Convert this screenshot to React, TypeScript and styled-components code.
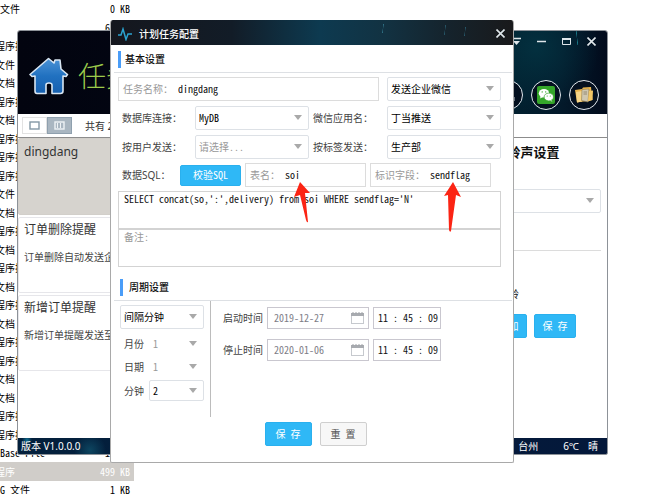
import React from "react";
import styled, { createGlobalStyle } from "styled-components";

const sans = `"Noto Sans", "Noto Sans CJK SC", sans-serif`;
const mono = `"Noto Sans Mono CJK SC", "Noto Sans CJK SC", "Liberation Mono", monospace`;

const GlobalStyle = createGlobalStyle`
  *, *::before, *::after { box-sizing: border-box; }
  body { margin: 0; background: #fff; color: #222; font: 10px/14px ${sans}; overflow: hidden; }
  button, input, select, textarea { font: inherit; color: inherit; margin: 0; }
  button { cursor: pointer; }
  h1, h2, h3, p, ul { margin: 0; padding: 0; font-weight: 400; }
`;

/* ---------- desktop and file list ---------- */

const Desktop = styled.main`
  position: relative;
  height: 100vh;
  overflow: hidden;
`;

const FileList = styled.ul`
  list-style: none;
  width: 134px;
  overflow: hidden;
  font-family: ${mono};
  color: #000;
`;

const FileRow = styled.li<{ $selected?: boolean }>`
  display: flex;
  justify-content: space-between;
  align-items: center;
  height: 18px;
  padding-right: 4px;
  white-space: pre;
  background: ${(p) => (p.$selected ? "#d0cdc9" : "transparent")};
  color: ${(p) => (p.$selected ? "#fff" : "#000")};
  &:nth-child(even) { height: 19px; }
`;

const FileKind = styled.span<{ $clipped?: boolean }>`
  margin-left: ${(p) => (p.$clipped ? "-5px" : "0")};
`;

/* ---------- task window ---------- */

const Window = styled.section`
  position: absolute;
  left: 17px;
  right: 63px;
  top: 30px;
  display: flex;
  flex-direction: column;
  border: 1px solid #8d9298;
  border-radius: 3px 3px 2px 2px;
  background: #fff;
  overflow: hidden;
`;

const Banner = styled.header`
  display: flex;
  justify-content: space-between;
  height: 83px;
  background:
    linear-gradient(84deg, transparent 46%, #1a7c8c 50%, transparent 54%) calc(100% - 24px) 0 / 12px 14px no-repeat,
    radial-gradient(circle at 88% 20%, #03303f 0, transparent 12%),
    linear-gradient(90deg, #02040f 0, #030716 50%, #02202f 84%, #031a2b 92%, #020b1c 100%);
`;

const Brand = styled.div`
  display: flex;
  align-items: center;
  gap: 9px;
  padding: 6px 0 0 11px;
`;

const BrandTitle = styled.h1`
  font: 300 28px/36px ${sans};
  color: #9ccb4b;
`;

const BannerTools = styled.div`
  display: flex;
  flex-direction: column;
  align-items: flex-end;
  justify-content: space-between;
  padding: 6px 8px 4px 0;
`;

const ToolRow = styled.div<{ $gap: number; $end?: number }>`
  display: flex;
  align-items: center;
  gap: ${(p) => p.$gap}px;
  padding-right: ${(p) => p.$end ?? 0}px;
`;

const GlyphButton = styled.button`
  display: flex;
  padding: 0;
  border: 0;
  background: none;
  color: #dfe6ea;
`;

const RoundButton = styled.button`
  display: grid;
  place-items: center;
  width: 30px;
  height: 30px;
  padding: 0;
  border: 1px solid #e2e8ee;
  border-radius: 50%;
  background: #04101f;
`;

const Toolbar = styled.div`
  display: flex;
  align-items: center;
  height: 24px;
  padding-left: 4px;
  border-bottom: 1px solid #8c8c8c;
  font-size: 10px;
  color: #333;
`;

const ViewToggle = styled.button<{ $on?: boolean }>`
  display: grid;
  place-items: center;
  width: 25px;
  height: 17px;
  padding: 0;
  border: 1px solid ${(p) => (p.$on ? "#8fa0ae" : "#e2e2e2")};
  background: ${(p) => (p.$on ? "#a9b6c1" : "#fff")};
`;

const Count = styled.span`
  padding-left: 13px;
`;

const Columns = styled.div`
  display: grid;
  grid-template-columns: 1fr 151px;
  height: 300px;
`;

const Tasks = styled.ul`
  display: flex;
  flex-direction: column;
  gap: 2px;
  list-style: none;
`;

const Task = styled.li<{ $active?: boolean }>`
  height: ${(p) => (p.$active ? 77 : 76)}px;
  padding: ${(p) => (p.$active ? "4px 5px" : "3px 5px")};
  border: 1px solid ${(p) => (p.$active ? "#d2cfca" : "#e6e6ea")};
  border-radius: 2px;
  background: ${(p) => (p.$active ? "#d6d3ce" : "#fff")};
  color: #333;
`;

const TaskName = styled.h3`
  font-size: 12px;
  line-height: 18px;
`;

const TaskNote = styled.p`
  margin-top: 11px;
  line-height: 14px;
  color: #444;
`;

const Ringtone = styled.aside`
  display: flex;
  flex-direction: column;
  padding: 3px 6px 0 4px;
`;

const RingtoneTitle = styled.h2`
  padding-left: 6px;
  font: 700 13px/22px ${sans};
  text-align: center;
  color: #111;
`;

const RingSelect = styled.div`
  display: flex;
  margin-top: 26px;
`;

const Divider = styled.hr`
  width: 100%;
  margin: 37px 0 0;
  border: 0;
  border-top: 1px solid #dcdcdc;
`;

const RingLabel = styled.p`
  margin-top: 36px;
  padding-right: 82px;
  text-align: right;
  color: #111;
`;

const RingActions = styled.div`
  display: flex;
  justify-content: center;
  gap: 7px;
  margin-top: 13px;
`;

const StatusBar = styled.footer`
  display: flex;
  justify-content: space-between;
  align-items: center;
  height: 16px;
  padding: 0 9px 0 3px;
  color: #fff;
  background:
    radial-gradient(circle at 9px 2px, #116f92 0, transparent 5px),
    radial-gradient(circle at 72px 12px, #0d4560 0, transparent 16px),
    linear-gradient(90deg, #03203c, #041d3c 40%, #04183a);
`;

const Weather = styled.div`
  display: flex;
  gap: 9px;
  & > :first-child { padding-right: 16px; }
`;

/* ---------- shared form parts ---------- */

const PrimaryButton = styled.button<{ $w: number; $h?: number }>`
  width: ${(p) => p.$w}px;
  height: ${(p) => p.$h ?? 24}px;
  padding: 0;
  border: 1px solid #2ab0ee;
  border-radius: 2px;
  background: #2fb8f6;
  color: #fff;
  font-family: ${mono};
  font-size: 10px;
  white-space: pre;
`;

const PlainButton = styled(PrimaryButton)`
  border-color: #cfcfcf;
  background: #f7f7f7;
  color: #555;
`;

const SelectBox = styled.div<{ $bare?: boolean; $h?: number; $muted?: boolean }>`
  position: relative;
  display: flex;
  flex: 1;
  min-width: 0;
  height: ${(p) => p.$h ?? 24}px;
  border: 1px solid ${(p) => (p.$bare ? "transparent" : "#dde1e6")};
  border-radius: 2px;
  background: #fff;
  color: ${(p) => (p.$muted ? "#999" : "#000")};
  &::after {
    content: "";
    position: absolute;
    right: 6px;
    top: 50%;
    margin-top: -3px;
    border: 4px solid transparent;
    border-top: 5px solid #a9a9a9;
    border-bottom: 0;
    pointer-events: none;
  }
`;

const NativeSelect = styled.select`
  appearance: none;
  width: 100%;
  padding: 0 18px 0 3px;
  border: 0;
  background: transparent;
  font-family: ${mono};
  outline: none;
`;

function Select(props: {
  id: string;
  value: string;
  label?: string;
  bare?: boolean;
  muted?: boolean;
  h?: number;
}) {
  return (
    <SelectBox $bare={props.bare} $muted={props.muted} $h={props.h}>
      <NativeSelect id={props.id} aria-label={props.label} defaultValue={props.value}>
        <option>{props.value}</option>
      </NativeSelect>
    </SelectBox>
  );
}

/* ---------- dialog ---------- */

const Dialog = styled.section`
  position: absolute;
  left: 110px;
  right: 157px;
  top: 20px;
  border: 1px solid #a9a9a9;
  border-top: 0;
  border-radius: 3px 3px 2px 2px;
  background: #fff;
  overflow: hidden;
`;

const DialogHeader = styled.header`
  display: flex;
  align-items: center;
  gap: 7px;
  height: 25px;
  padding: 2px 8px 0 7px;
  color: #fff;
  background:
    linear-gradient(97deg, transparent 44%, #2f7084 50%, transparent 56%) 268px 4px / 8px 9px no-repeat,
    linear-gradient(97deg, transparent 44%, #27586a 50%, transparent 56%) 330px 5px / 8px 10px no-repeat,
    linear-gradient(97deg, transparent 44%, #27586a 50%, transparent 56%) 350px 7px / 8px 9px no-repeat,
    linear-gradient(90deg, #15171e 0, #121c27 30%, #0d3a50 52%, #123242 68%, #15232c 84%, #19191b 100%);
`;

const DialogTitle = styled.h2`
  flex: 1;
  font: 500 10px/14px ${sans};
`;

const SectionTitle = styled.h3<{ $start: number; $gap: number; $top: number }>`
  display: flex;
  align-items: center;
  gap: ${(p) => p.$gap}px;
  margin: ${(p) => p.$top}px 1px 0 3px;
  padding: 6px 0 4px ${(p) => p.$start}px;
  border-bottom: 1px solid #dde0e4;
  font: 500 10px/17px ${sans};
  color: #111;
  &::before {
    content: "";
    width: 3px;
    height: 17px;
    background: #4a9df8;
  }
`;

const BasicForm = styled.div`
  display: flex;
  flex-direction: column;
  gap: 4px;
  padding: 4px 12px 0 7px;
`;

const FormGrid = styled.div`
  display: grid;
  grid-template-columns: 77px 1fr 78px 1fr;
  row-gap: 5px;
  align-items: center;
`;

const Label = styled.label`
  padding-left: 4px;
  white-space: nowrap;
  color: #444;
`;

const Field = styled.div<{ $wide?: boolean }>`
  position: relative;
  display: flex;
  align-items: center;
  gap: 5px;
  flex: 1;
  min-width: 0;
  height: 24px;
  padding-left: 4px;
  border: 1px solid #dcdcdc;
  background: #fff;
  ${(p) => p.$wide && "grid-column: 1 / 4; margin-right: 8px;"}
`;

const FieldLabel = styled.label`
  flex: none;
  font-family: ${mono};
  color: #999;
`;

const FieldInput = styled.input`
  flex: 1;
  min-width: 0;
  width: 100%;
  padding: 0;
  border: 0;
  outline: none;
  background: transparent;
  font-family: ${mono};
  color: #111;
`;

const SqlRow = styled.div`
  display: flex;
  align-items: center;
  gap: 4px;
  padding-right: 10px;
`;

const SqlLabel = styled.span`
  width: 58px;
  padding-left: 4px;
  white-space: nowrap;
  color: #444;
`;

const Areas = styled.div`
  display: flex;
  flex-direction: column;
`;

const Area = styled.textarea`
  display: block;
  width: 100%;
  height: 38px;
  padding: 0 5px;
  border: 1px solid #d3d3d3;
  outline: none;
  resize: none;
  font: 10px/14px ${mono};
  color: #111;
  &::placeholder { color: #999; opacity: 1; }
`;

const Arrow = styled.svg<{ $x: number }>`
  position: absolute;
  left: ${(p) => p.$x}px;
  top: 18px;
  z-index: 1;
  pointer-events: none;
`;

const Cycle = styled.div`
  display: grid;
  grid-template-columns: 100px 1fr;
`;

const Interval = styled.div`
  display: flex;
  flex-direction: column;
  gap: 3px;
  height: 116px;
  padding: 4px 6px 0 9px;
  border-right: 1px solid #bcbcbc;
`;

const IntervalMode = styled.div`
  display: flex;
  padding-bottom: 2px;
`;

const Unit = styled.div`
  display: flex;
  align-items: center;
  gap: 5px;
  padding-left: 4px;
  color: #444;
`;

const Times = styled.div`
  display: flex;
  flex-direction: column;
  gap: 10px;
  padding: 6px 0 0 12px;
`;

const TimeRow = styled.div`
  display: flex;
  align-items: center;
  gap: 4px;
  color: #444;
`;

const TimeBox = styled.div<{ $w: number; $muted?: boolean }>`
  display: flex;
  align-items: center;
  width: ${(p) => p.$w}px;
  height: 22px;
  padding: ${(p) => (p.$muted ? "0 4px 0 6px" : "0 1px 0 4px")};
  border: 1px solid #c9c7cf;
  & > input { color: ${(p) => (p.$muted ? "#7d7d86" : "#111")}; }
`;

const DialogActions = styled.footer`
  display: flex;
  justify-content: center;
  gap: 8px;
  padding: 5px 0 16px 7px;
`;

const files: { kind: string; size?: string; whole?: boolean; selected?: boolean }[] = [
  { kind: "文件", size: "0 KB", whole: true },
  { kind: "", size: "64 KB" },
  ..."程 件 档 程 档 程 程 程 件 档 程 档 程 档 程 档 程 程 档 档 程 程".split(" ").map((k) => ({
    kind: k === "程" ? "程序扩展" : `文${k}`,
  })),
  { kind: "Base File", size: "11 KB", whole: true },
  { kind: "程序", size: "499 KB", selected: true },
  { kind: "G 文件", size: "1 KB", whole: true },
];

const HouseIcon = () => (
  <svg width="40" height="38" viewBox="0 0 40 38" aria-hidden="true">
    <defs>
      <linearGradient id="house" x1="0" y1="0" x2="0" y2="1">
        <stop offset="0" stopColor="#4b93d6" />
        <stop offset="0.5" stopColor="#2171c0" />
        <stop offset="1" stopColor="#1660b0" />
      </linearGradient>
    </defs>
    <path
      d="M19.500 1.500 L25 6 L26 3 L31 3 L32 12 L38.500 17.500 L37 19.500 L34 19 L34 34 Q34 36.500 31.500 36.500 L23 36.500 L23 28 Q23 26 20 26 Q17 26 17 28 L17 36.500 L8 36.500 Q6 36.500 6 34 L6 19 L3 19.500 L1 17.500 Z"
      fill="url(#house)"
      stroke="#d9e6f2"
      strokeWidth="1.600"
      strokeLinejoin="round"
    />
  </svg>
);

const CloseIcon = () => (
  <svg width="9" height="9" viewBox="0 0 9 9" aria-hidden="true">
    <path d="M0.500 0.500 L8.500 8.500 M8.500 0.500 L0.500 8.500" stroke="currentColor" strokeWidth="1.600" />
  </svg>
);

const CalendarIcon = () => (
  <svg width="13" height="13" viewBox="0 0 13 13" aria-hidden="true">
    <rect x="0.500" y="1.500" width="12" height="10" fill="#fff" stroke="#c6c9ce" />
    <path d="M0 1 H13 V4 H0 Z" fill="#a8abb0" />
    <path d="M2 0 V2 M5 0 V2 M8 0 V2 M11 0 V2" stroke="#a0a3a8" />
  </svg>
);

function TaskWindow() {
  return (
    <Window>
      <Banner>
        <Brand>
          <HouseIcon />
          <BrandTitle>任务</BrandTitle>
        </Brand>
        <BannerTools>
          <ToolRow $gap={16} $end={3}>
            <GlyphButton aria-label="菜单">
              <svg width="9" height="9" viewBox="0 0 9 9">
                <path d="M0 1.500 H9" stroke="currentColor" strokeWidth="1.500" />
                <path d="M1 4 H8 L4.500 8 Z" fill="currentColor" />
              </svg>
            </GlyphButton>
            <GlyphButton aria-label="最小化">
              <svg width="9" height="9" viewBox="0 0 9 9">
                <path d="M0 4.500 H9" stroke="currentColor" strokeWidth="1.600" />
              </svg>
            </GlyphButton>
            <GlyphButton aria-label="最大化">
              <svg width="9" height="9" viewBox="0 0 9 9">
                <path d="M0.500 1 V7.500 H8.500 V1" fill="none" stroke="currentColor" />
                <path d="M0 2 H9" stroke="currentColor" strokeWidth="2" />
              </svg>
            </GlyphButton>
            <GlyphButton aria-label="关闭">
              <CloseIcon />
            </GlyphButton>
          </ToolRow>
          <ToolRow $gap={8}>
            <RoundButton aria-label="工具">
              <svg width="18" height="18" viewBox="0 0 18 18">
                <path d="M4 8 H14 M9 4 V15 M10 12 H16 M10 14 H16 M13 10 V16" stroke="#cfd5dc" />
              </svg>
            </RoundButton>
            <RoundButton aria-label="微信">
              <svg width="18" height="18" viewBox="0 0 18 18">
                <rect width="18" height="18" rx="2" fill="#35a52a" />
                <path d="M3.500 10 L3.200 12.500 L6 11 Z" fill="#fff" />
                <ellipse cx="7" cy="7.200" rx="5.200" ry="4.300" fill="#fff" />
                <path d="M14 13 L15.300 15.500 L12 14.500 Z" fill="#fff" />
                <ellipse cx="11.800" cy="11" rx="4.700" ry="3.900" fill="#fff" stroke="#35a52a" strokeWidth="0.700" />
                <circle cx="5.200" cy="5.900" r="0.700" fill="#35a52a" />
                <circle cx="8.700" cy="5.900" r="0.700" fill="#35a52a" />
                <circle cx="10.200" cy="10" r="0.600" fill="#35a52a" />
                <circle cx="13.300" cy="10" r="0.600" fill="#35a52a" />
              </svg>
            </RoundButton>
            <RoundButton aria-label="文件夹">
              <svg width="20" height="18" viewBox="0 0 20 18">
                <path d="M1 4 L8 3 L9 1.500 L17 1 L18.500 14 L3 16.500 Z" fill="#eab54e" />
                <path d="M2 6 L8 5 L8 15.500 L3 16.500 Z" fill="#f6d588" />
                <path d="M8 3.500 L15 3 L14 16 L7.500 14.500 Z" fill="#cfc7b0" stroke="#8f7a4c" strokeWidth="0.600" />
                <path d="M9.500 6 H13 M9.500 8 H13" stroke="#857a62" strokeWidth="0.800" />
                <path d="M15 5 L19 4.500 L18.500 14 L14 15.500 Z" fill="#f3c766" />
              </svg>
            </RoundButton>
          </ToolRow>
        </BannerTools>
      </Banner>
      <Toolbar>
        <ViewToggle aria-label="单栏">
          <svg width="11" height="9" viewBox="0 0 11 9">
            <rect x="1" y="1" width="9" height="7" fill="#fff" stroke="#8498a5" strokeWidth="1.400" />
          </svg>
        </ViewToggle>
        <ViewToggle $on aria-label="双栏">
          <svg width="11" height="9" viewBox="0 0 11 9">
            <rect x="1" y="1" width="9" height="7" fill="none" stroke="#eef2f5" strokeWidth="1.400" />
            <path d="M6.500 2 V7 M3.500 2 V7" stroke="#eef2f5" />
          </svg>
        </ViewToggle>
        <Count>共有 2</Count>
      </Toolbar>
      <Columns>
        <Tasks>
          <Task $active>
            <TaskName>dingdang</TaskName>
          </Task>
          <Task>
            <TaskName>订单删除提醒</TaskName>
            <TaskNote>订单删除自动发送企业微信</TaskNote>
          </Task>
          <Task>
            <TaskName>新增订单提醒</TaskName>
            <TaskNote>新增订单提醒发送至企业微信</TaskNote>
          </Task>
        </Tasks>
        <Ringtone>
          <RingtoneTitle>铃声设置</RingtoneTitle>
          <RingSelect>
            <Select id="ringtone" value="" label="铃声" />
          </RingSelect>
          <Divider />
          <RingLabel>铃</RingLabel>
          <RingActions>
            <PrimaryButton $w={42}>添 加</PrimaryButton>
            <PrimaryButton $w={42}>保 存</PrimaryButton>
          </RingActions>
        </Ringtone>
      </Columns>
      <StatusBar>
        <span>版本 V1.0.0.0</span>
        <Weather>
          <span>台州</span>
          <span>6℃</span>
          <span>晴</span>
        </Weather>
      </StatusBar>
    </Window>
  );
}

function TaskDialog() {
  return (
    <Dialog role="dialog" aria-labelledby="dialog-title">
      <DialogHeader>
        <svg width="14" height="14" viewBox="0 0 14 14" aria-hidden="true">
          <path d="M0 8 H3 L5 2 L8 12.500 L10 7 H14" fill="none" stroke="#2ba3cf" strokeWidth="1.500" />
        </svg>
        <DialogTitle id="dialog-title">计划任务配置</DialogTitle>
        <GlyphButton aria-label="关闭">
          <CloseIcon />
        </GlyphButton>
      </DialogHeader>

      <SectionTitle $start={4} $gap={4} $top={0}>基本设置</SectionTitle>
      <BasicForm>
        <FormGrid>
          <Field $wide>
            <FieldLabel htmlFor="task-name">任务名称：</FieldLabel>
            <FieldInput id="task-name" defaultValue="dingdang" />
          </Field>
          <Select id="send-type" label="发送方式" value="发送企业微信" />
          <Label htmlFor="database">数据库连接：</Label>
          <Select id="database" value="MyDB" />
          <Label htmlFor="wechat-app">微信应用名：</Label>
          <Select id="wechat-app" value="丁当推送" />
          <Label htmlFor="by-user">按用户发送：</Label>
          <Select id="by-user" value="请选择..." muted />
          <Label htmlFor="by-tag">按标签发送：</Label>
          <Select id="by-tag" value="生产部" />
        </FormGrid>
        <SqlRow>
          <SqlLabel>数据SQL：</SqlLabel>
          <PrimaryButton $w={61} $h={21}>校验SQL</PrimaryButton>
          <Field>
            <FieldLabel htmlFor="table-name">表名：</FieldLabel>
            <FieldInput id="table-name" defaultValue="soi" />
            <Arrow $x={48} width="18" height="42" viewBox="0 0 18 42" aria-hidden="true">
              <path d="M6 0 L16 11 L11 11 L14 40 Q13 41 12 38 L6 13 L0 15 Z" fill="#fb2414" />
            </Arrow>
          </Field>
          <Field>
            <FieldLabel htmlFor="flag-field">标识字段：</FieldLabel>
            <FieldInput id="flag-field" defaultValue="sendflag" />
            <Arrow $x={73} width="18" height="51" viewBox="0 0 18 51" aria-hidden="true">
              <path d="M9 0 L17 15 L12 13 L7 49 Q6 51 5 48 L4 13 L0 14 Z" fill="#fb2414" />
            </Arrow>
          </Field>
        </SqlRow>
        <Areas>
          <Area aria-label="SQL" defaultValue="SELECT concat(so,':',delivery) from soi WHERE sendflag='N'" />
          <Area aria-label="备注" placeholder="备注:" />
        </Areas>
      </BasicForm>

      <SectionTitle $start={6} $gap={6} $top={6}>周期设置</SectionTitle>
      <Cycle>
        <Interval>
          <IntervalMode>
            <Select id="interval" label="周期" value="间隔分钟" />
          </IntervalMode>
          <Unit>
            <label htmlFor="month">月份</label>
            <Select id="month" value="1" bare muted h={20} />
          </Unit>
          <Unit>
            <label htmlFor="day">日期</label>
            <Select id="day" value="1" bare muted h={20} />
          </Unit>
          <Unit>
            <label htmlFor="minute">分钟</label>
            <Select id="minute" value="2" h={21} />
          </Unit>
        </Interval>
        <Times>
          <TimeRow>
            <label htmlFor="start-date">启动时间</label>
            <TimeBox $w={102} $muted>
              <FieldInput id="start-date" defaultValue="2019-12-27" />
              <CalendarIcon />
            </TimeBox>
            <TimeBox $w={68}>
              <FieldInput aria-label="启动时刻" defaultValue="11 : 45 : 09" />
            </TimeBox>
          </TimeRow>
          <TimeRow>
            <label htmlFor="stop-date">停止时间</label>
            <TimeBox $w={102} $muted>
              <FieldInput id="stop-date" defaultValue="2020-01-06" />
              <CalendarIcon />
            </TimeBox>
            <TimeBox $w={68}>
              <FieldInput aria-label="停止时刻" defaultValue="11 : 45 : 09" />
            </TimeBox>
          </TimeRow>
        </Times>
      </Cycle>
      <DialogActions>
        <PrimaryButton $w={47}>保 存</PrimaryButton>
        <PlainButton $w={47}>重 置</PlainButton>
      </DialogActions>
    </Dialog>
  );
}

export default function App() {
  return (
    <>
      <GlobalStyle />
      <Desktop>
        <FileList>
          {files.map((f, i) => (
            <FileRow key={i} $selected={f.selected}>
              <FileKind $clipped={!f.whole}>{f.kind}</FileKind>
              <span>{f.size}</span>
            </FileRow>
          ))}
        </FileList>
        <TaskWindow />
        <TaskDialog />
      </Desktop>
    </>
  );
}
